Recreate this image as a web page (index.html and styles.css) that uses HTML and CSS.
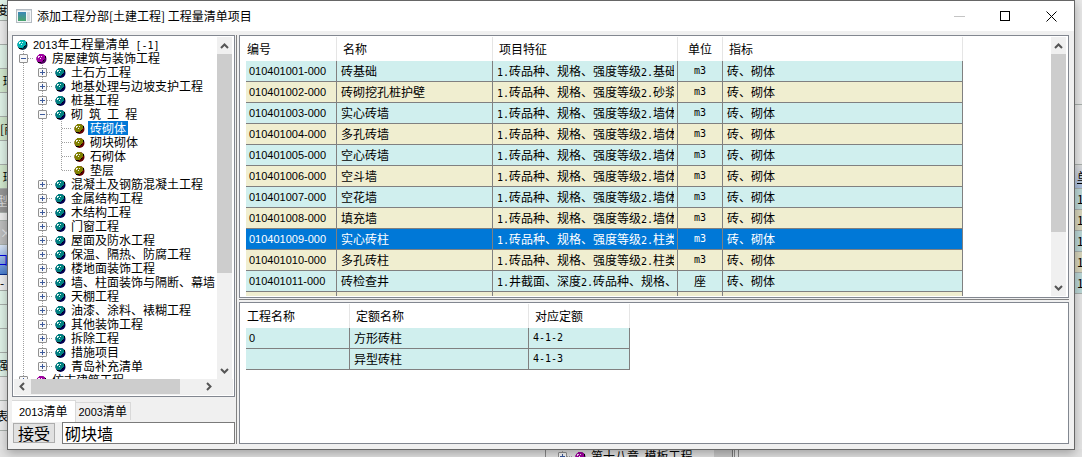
FILE: index.html
```html
<!DOCTYPE html>
<html lang="zh-CN">
<head>
<meta charset="utf-8">
<title>添加工程分部[土建工程] 工程量清单项目</title>
<link rel="stylesheet" href="styles.css">
</head>
<body>
<svg class="defs" aria-hidden="true">
  <defs>
    <symbol id="v" viewBox="0 0 19 14"><path class="dots" d="M9.5 0V14"/></symbol>
    <symbol id="tee" viewBox="0 0 19 14"><path class="dots" d="M9.5 0V14M10 7.5H19"/></symbol>
    <symbol id="elbow" viewBox="0 0 19 14"><path class="dots" d="M9.5 0V8M10 7.5H19"/></symbol>
    <symbol id="box" viewBox="0 0 19 14"><path class="dots" d="M9.5 0V14M14 7.5H19"/><rect x="5.5" y="3.5" width="8" height="8" rx=".5" fill="#f8f8f8" stroke="#919191"/></symbol>
    <symbol id="minus" viewBox="0 0 19 14"><use href="#box"/><path d="M7 7.5H12" stroke="#3c5a9c"/></symbol>
    <symbol id="plus" viewBox="0 0 19 14"><use href="#box"/><path d="M7 7.5H12M9.5 5V10" stroke="#3c5a9c"/></symbol>
    <symbol id="ball" viewBox="0 0 19 14">
      <circle cx="8.5" cy="8" r="5" class="ball-shade"/>
      <path d="M4 5H5V4H6V3H10V4H12V6H12V8H11V9H10V10H9V11H5V10H4V9H3.500V6H4Z" fill="currentColor"/>
      <path d="M5 11h3v1h-3zM12 5h1v2h-1zM10 9h1v1h-1z" fill="#000"/>
      <path d="M5 5h2v1h-1v1h-1zM8 5h1v1h-1zM7 7h1v1h-1z" fill="#fff" opacity=".9"/>
    </symbol>
    <symbol id="up" viewBox="0 0 15 17"><path class="arrow" d="M4 11L7.500 7.500L11 11"/></symbol>
    <symbol id="down" viewBox="0 0 15 17"><path class="arrow" d="M4 7L7.500 10.500L11 7"/></symbol>
    <symbol id="left" viewBox="0 0 17 15"><path class="arrow" d="M10 4L6.500 7.500L10 11"/></symbol>
    <symbol id="right" viewBox="0 0 17 15"><path class="arrow" d="M7 4L10.500 7.500L7 11"/></symbol>
  </defs>
</svg>

<div class="behind behind-left" aria-hidden="true">
  <span class="clip tail h21 mint">度</span>
  <span class="clip h24 pale"></span>
  <span class="clip h24 mint"></span>
  <span class="clip h24 green">&nbsp;环</span>
  <span class="clip h24 mint"></span>
  <span class="clip h24 green">[商</span>
  <span class="clip h24 mint"></span>
  <span class="clip h24 green">&nbsp;环</span>
  <span class="clip tail h24 dark">型</span>
  <span class="clip h8 pale"></span>
  <span class="clip h24 mid">×</span>
  <span class="clip tail h30 blue">口</span>
  <span class="clip h16 button-edge">-</span>
  <span class="clip h14 mint"></span>
  <span class="clip h24 mint"></span>
  <span class="clip h24 mint"></span>
  <span class="clip tail h24 mint">强</span>
  <span class="clip h24 pale"></span>
  <span class="clip tail h30 pale">表</span>
</div>
<div class="behind behind-right" aria-hidden="true">
  <span class="clip h105 light"></span>
  <span class="clip h60 light"></span>
  <span class="clip h24 head"><u>单</u></span>
  <span class="clip h21 cyan">1</span>
  <span class="clip h21 cream">1</span>
  <span class="clip h21 cyan">1</span>
  <span class="clip h21 cream">1</span>
  <span class="clip h21 cyan">1</span>
</div>
<div class="behind behind-bottom" aria-hidden="true">
  <div class="under-tree">
    <svg class="cell"><use href="#plus"/></svg><svg class="cell ball purple"><use href="#ball"/></svg>
    <span class="under-text">第十八章&nbsp; 模板工程</span><span class="under-bar"></span>
  </div>
  <div class="under-split"></div>
</div>

<main class="dialog">
  <header class="titlebar">
    <svg class="app-icon" viewBox="0 0 16 14">
      <defs><linearGradient id="g" x2="0" y2="1"><stop stop-color="#3c87b8"/><stop offset="1" stop-color="#4aa56c"/></linearGradient></defs>
      <rect x=".5" y=".5" width="15" height="13" fill="#f3f5f7" stroke="#b4bbc2"/>
      <rect x="2" y="3" width="8" height="9" fill="url(#g)"/>
      <rect x="11" y="3" width="3" height="9" fill="#d5dade"/>
      <path d="M1 1.500H15" stroke="#d5dce2"/>
    </svg>
    <h1 class="title">添加工程分部[土建工程] 工程量清单项目</h1>
    <button class="win-button" type="button" aria-label="最小化" disabled><svg class="win-icon" viewBox="0 0 11 11"><path d="M0 5.500H11" stroke="#c4c4c4"/></svg></button>
    <button class="win-button" type="button" aria-label="最大化"><svg class="win-icon" viewBox="0 0 11 11"><rect x=".5" y=".5" width="9" height="9" fill="none" stroke="#000"/></svg></button>
    <button class="win-button" type="button" aria-label="关闭"><svg class="win-icon" viewBox="0 0 11 11"><path d="M.5 .5L10.500 10.500M10.500 .5L.5 10.500" stroke="#000"/></svg></button>
  </header>

  <div class="content">
    <section class="side">
      <div class="panel tree-panel">
        <div class="tree-main">
          <ul class="tree">
            <li class="node"><svg class="cell ball bright"><use href="#ball"/></svg><span class="label"><span class="digits">2013</span>年工程量清单<span class="mono"> [-1]</span></span></li>
            <li class="node"><svg class="cell"><use href="#minus"/></svg><svg class="cell ball purple"><use href="#ball"/></svg><span class="label">房屋建筑与装饰工程</span></li>
            <li class="node"><svg class="cell"><use href="#v"/></svg><svg class="cell"><use href="#plus"/></svg><svg class="cell ball teal"><use href="#ball"/></svg><span class="label">土石方工程</span></li>
            <li class="node"><svg class="cell"><use href="#v"/></svg><svg class="cell"><use href="#plus"/></svg><svg class="cell ball teal"><use href="#ball"/></svg><span class="label">地基处理与边坡支护工程</span></li>
            <li class="node"><svg class="cell"><use href="#v"/></svg><svg class="cell"><use href="#plus"/></svg><svg class="cell ball teal"><use href="#ball"/></svg><span class="label">桩基工程</span></li>
            <li class="node"><svg class="cell"><use href="#v"/></svg><svg class="cell"><use href="#minus"/></svg><svg class="cell ball teal"><use href="#ball"/></svg><span class="label">砌<span class="mono"> </span>筑<span class="mono"> </span>工<span class="mono"> </span>程</span></li>
            <li class="node"><svg class="cell"><use href="#v"/></svg><svg class="cell"><use href="#v"/></svg><svg class="cell"><use href="#tee"/></svg><svg class="cell ball olive"><use href="#ball"/></svg><span class="label selected">砖砌体</span></li>
            <li class="node"><svg class="cell"><use href="#v"/></svg><svg class="cell"><use href="#v"/></svg><svg class="cell"><use href="#tee"/></svg><svg class="cell ball olive"><use href="#ball"/></svg><span class="label">砌块砌体</span></li>
            <li class="node"><svg class="cell"><use href="#v"/></svg><svg class="cell"><use href="#v"/></svg><svg class="cell"><use href="#tee"/></svg><svg class="cell ball olive"><use href="#ball"/></svg><span class="label">石砌体</span></li>
            <li class="node"><svg class="cell"><use href="#v"/></svg><svg class="cell"><use href="#v"/></svg><svg class="cell"><use href="#elbow"/></svg><svg class="cell ball olive"><use href="#ball"/></svg><span class="label">垫层</span></li>
            <li class="node"><svg class="cell"><use href="#v"/></svg><svg class="cell"><use href="#plus"/></svg><svg class="cell ball teal"><use href="#ball"/></svg><span class="label">混凝土及钢筋混凝土工程</span></li>
            <li class="node"><svg class="cell"><use href="#v"/></svg><svg class="cell"><use href="#plus"/></svg><svg class="cell ball teal"><use href="#ball"/></svg><span class="label">金属结构工程</span></li>
            <li class="node"><svg class="cell"><use href="#v"/></svg><svg class="cell"><use href="#plus"/></svg><svg class="cell ball teal"><use href="#ball"/></svg><span class="label">木结构工程</span></li>
            <li class="node"><svg class="cell"><use href="#v"/></svg><svg class="cell"><use href="#plus"/></svg><svg class="cell ball teal"><use href="#ball"/></svg><span class="label">门窗工程</span></li>
            <li class="node"><svg class="cell"><use href="#v"/></svg><svg class="cell"><use href="#plus"/></svg><svg class="cell ball teal"><use href="#ball"/></svg><span class="label">屋面及防水工程</span></li>
            <li class="node"><svg class="cell"><use href="#v"/></svg><svg class="cell"><use href="#plus"/></svg><svg class="cell ball teal"><use href="#ball"/></svg><span class="label">保温、隔热、防腐工程</span></li>
            <li class="node"><svg class="cell"><use href="#v"/></svg><svg class="cell"><use href="#plus"/></svg><svg class="cell ball teal"><use href="#ball"/></svg><span class="label">楼地面装饰工程</span></li>
            <li class="node"><svg class="cell"><use href="#v"/></svg><svg class="cell"><use href="#plus"/></svg><svg class="cell ball teal"><use href="#ball"/></svg><span class="label">墙、柱面装饰与隔断、幕墙</span></li>
            <li class="node"><svg class="cell"><use href="#v"/></svg><svg class="cell"><use href="#plus"/></svg><svg class="cell ball teal"><use href="#ball"/></svg><span class="label">天棚工程</span></li>
            <li class="node"><svg class="cell"><use href="#v"/></svg><svg class="cell"><use href="#plus"/></svg><svg class="cell ball teal"><use href="#ball"/></svg><span class="label">油漆、涂料、裱糊工程</span></li>
            <li class="node"><svg class="cell"><use href="#v"/></svg><svg class="cell"><use href="#plus"/></svg><svg class="cell ball teal"><use href="#ball"/></svg><span class="label">其他装饰工程</span></li>
            <li class="node"><svg class="cell"><use href="#v"/></svg><svg class="cell"><use href="#plus"/></svg><svg class="cell ball teal"><use href="#ball"/></svg><span class="label">拆除工程</span></li>
            <li class="node"><svg class="cell"><use href="#v"/></svg><svg class="cell"><use href="#plus"/></svg><svg class="cell ball teal"><use href="#ball"/></svg><span class="label">措施项目</span></li>
            <li class="node"><svg class="cell"><use href="#v"/></svg><svg class="cell"><use href="#plus"/></svg><svg class="cell ball teal"><use href="#ball"/></svg><span class="label">青岛补充清单</span></li>
            <li class="node"><svg class="cell"><use href="#plus"/></svg><svg class="cell ball purple"><use href="#ball"/></svg><span class="label">仿古建筑工程</span></li>
          </ul>
          <div class="vscroll"><svg class="varrow"><use href="#up"/></svg><div class="track"><div class="thumb tree-thumb"></div></div><svg class="varrow"><use href="#down"/></svg></div>
        </div>
        <div class="hscroll"><svg class="harrow"><use href="#left"/></svg><div class="track"><div class="thumb wide-thumb"></div></div><svg class="harrow"><use href="#right"/></svg></div>
      </div>
      <div class="tabs" role="tablist">
        <button class="tab active" type="button" role="tab" aria-selected="true"><span class="digits">2013</span>清单</button>
        <button class="tab" type="button" role="tab" aria-selected="false"><span class="digits">2003</span>清单</button>
      </div>
      <form class="search">
        <button class="accept" type="button">接受</button>
        <input class="query" type="text" value="砌块墙" aria-label="清单名称">
      </form>
    </section>

    <div class="split-v"></div>

    <section class="main">
      <div class="panel items-panel">
        <div class="grid-area">
          <table class="grid items">
            <colgroup><col class="c-code"><col class="c-name"><col class="c-feature"><col class="c-unit"><col class="c-index"></colgroup>
            <thead><tr><th>编号</th><th>名称</th><th>项目特征</th><th class="center">单位</th><th>指标</th></tr></thead>
            <tbody>
              <tr><td class="digits">010401001-000</td><td>砖基础</td><td><div class="cut"><span class="mono">1.</span>砖品种、规格、强度等级<span class="mono">2.</span>基础</div></td><td class="center mono">m3</td><td>砖、砌体</td></tr>
              <tr><td class="digits">010401002-000</td><td>砖砌挖孔桩护壁</td><td><div class="cut"><span class="mono">1.</span>砖品种、规格、强度等级<span class="mono">2.</span>砂浆</div></td><td class="center mono">m3</td><td>砖、砌体</td></tr>
              <tr><td class="digits">010401003-000</td><td>实心砖墙</td><td><div class="cut"><span class="mono">1.</span>砖品种、规格、强度等级<span class="mono">2.</span>墙体</div></td><td class="center mono">m3</td><td>砖、砌体</td></tr>
              <tr><td class="digits">010401004-000</td><td>多孔砖墙</td><td><div class="cut"><span class="mono">1.</span>砖品种、规格、强度等级<span class="mono">2.</span>墙体</div></td><td class="center mono">m3</td><td>砖、砌体</td></tr>
              <tr><td class="digits">010401005-000</td><td>空心砖墙</td><td><div class="cut"><span class="mono">1.</span>砖品种、规格、强度等级<span class="mono">2.</span>墙体</div></td><td class="center mono">m3</td><td>砖、砌体</td></tr>
              <tr><td class="digits">010401006-000</td><td>空斗墙</td><td><div class="cut"><span class="mono">1.</span>砖品种、规格、强度等级<span class="mono">2.</span>墙体</div></td><td class="center mono">m3</td><td>砖、砌体</td></tr>
              <tr><td class="digits">010401007-000</td><td>空花墙</td><td><div class="cut"><span class="mono">1.</span>砖品种、规格、强度等级<span class="mono">2.</span>墙体</div></td><td class="center mono">m3</td><td>砖、砌体</td></tr>
              <tr><td class="digits">010401008-000</td><td>填充墙</td><td><div class="cut"><span class="mono">1.</span>砖品种、规格、强度等级<span class="mono">2.</span>墙体</div></td><td class="center mono">m3</td><td>砖、砌体</td></tr>
              <tr class="current"><td class="digits">010401009-000</td><td>实心砖柱</td><td><div class="cut"><span class="mono">1.</span>砖品种、规格、强度等级<span class="mono">2.</span>柱类</div></td><td class="center mono">m3</td><td>砖、砌体</td></tr>
              <tr><td class="digits">010401010-000</td><td>多孔砖柱</td><td><div class="cut"><span class="mono">1.</span>砖品种、规格、强度等级<span class="mono">2.</span>柱类</div></td><td class="center mono">m3</td><td>砖、砌体</td></tr>
              <tr><td class="digits">010401011-000</td><td>砖检查井</td><td><div class="cut"><span class="mono">1.</span>井截面、深度<span class="mono">2.</span>砖品种、规格、</div></td><td class="center">座</td><td>砖、砌体</td></tr>
              <tr><td></td><td></td><td></td><td></td><td></td></tr>
            </tbody>
          </table>
        </div>
        <div class="vscroll"><svg class="varrow"><use href="#up"/></svg><div class="track"><div class="thumb items-thumb"></div></div><svg class="varrow"><use href="#down"/></svg></div>
      </div>
      <div class="split-h"></div>
      <div class="panel quota-panel">
        <div class="grid-area">
          <table class="grid quotas">
            <colgroup><col class="c-project"><col class="c-quota"><col class="c-match"></colgroup>
            <thead><tr><th>工程名称</th><th>定额名称</th><th>对应定额</th></tr></thead>
            <tbody>
              <tr><td class="digits">0</td><td>方形砖柱</td><td class="mono">4-1-2</td></tr>
              <tr><td></td><td>异型砖柱</td><td class="mono">4-1-3</td></tr>
            </tbody>
          </table>
        </div>
      </div>
    </section>
  </div>
</main>
</body>
</html>
```
FILE: styles.css
```css
* { box-sizing: border-box; }

body {
  margin: 0;
  height: 100vh;
  overflow: hidden;
  background: #e6e6e6;
  color: #000;
  font: 12px/14px "Noto Sans CJK SC", sans-serif;
}

button, input { font: inherit; color: inherit; margin: 0; }
svg { display: block; flex: none; }
.defs { position: absolute; width: 0; height: 0; }

.digits { font-family: "Liberation Sans", "Noto Sans CJK SC", sans-serif; font-size: 11px; }
.mono { font-family: "DejaVu Sans Mono", "Noto Sans CJK SC", monospace; font-size: 10px; white-space: pre; }

/* Windows underneath the dialog */
.behind { position: absolute; overflow: hidden; display: flex; }
.behind-left { left: 0; top: 0; width: 8px; flex-direction: column; }
.behind-right { right: 0; top: 0; width: 8px; flex-direction: column; }
.behind-bottom { left: 0; right: 0; bottom: 0; height: 8px; padding-left: 545px; background: #e2e2e2; }
.clip { display: flex; flex: none; align-items: center; overflow: hidden; white-space: nowrap; border-bottom: 1px solid #a9b0ac; }
.tail { justify-content: flex-end; }
.h8 { height: 8px; } .h14 { height: 14px; } .h16 { height: 16px; }
.h21 { height: 21px; } .h24 { height: 24px; } .h30 { height: 30px; }
.h60 { height: 60px; } .h105 { height: 105px; }
.mint { background: #e0f3e8; }
.green { background: #d3eacf; }
.pale { background: #ededed; }
.light { background: #e8e8e8; }
.dark { background: #969696; color: #ddd; }
.mid { background: #bebebe; color: #eee; }
.blue { background: linear-gradient(#dce8f8, #4b7fd0); color: #0000e0; border-bottom-color: #0a2f8f; }
.button-edge { background: #f0f0f0; }
.head { background: linear-gradient(#dcdcdc, #a9bede); padding-left: 3px; }
.cyan { background: #bcd8d7; padding-left: 3px; }
.cream { background: #d8d6bc; padding-left: 3px; }
.under-tree { display: flex; width: 188px; height: 14px; padding-left: 7px; border-left: 1px solid #888; border-right: 1px solid #777; }
.under-text { line-height: 14px; white-space: nowrap; }
.under-bar { width: 18px; margin-left: auto; background: #c8c8c8; }
.under-split { width: 5px; margin-left: 1px; border: 1px solid #888; border-width: 0 1px; }

/* Dialog frame */
.dialog {
  position: relative;
  display: flex;
  flex-direction: column;
  height: calc(100vh - 7px);
  margin: 0 7px 7px;
  border: 1px solid #666;
  background: #f0f0f0;
  box-shadow: 0 3px 10px rgba(0, 0, 0, .3);
}
.titlebar { display: flex; flex: none; align-items: center; height: 30px; padding-left: 8px; background: #fff; }
.app-icon { width: 16px; height: 14px; }
.title { flex: 1; margin: 0 0 0 5px; font-size: 12px; font-weight: 400; white-space: nowrap; }
.win-button { display: flex; flex: none; align-items: center; justify-content: center; width: 46px; height: 30px; padding: 0; border: 0; background: none; }
.win-icon { width: 11px; height: 11px; }

.content { display: flex; flex: 1; min-height: 0; padding: 4px 5px 5px 4px; }
.side { display: flex; flex: none; flex-direction: column; width: 223px; }
.split-v { flex: none; width: 1px; margin: 0 2px 0 1px; background: #828282; }
.main { display: grid; flex: 1; grid-template-rows: minmax(0, 263fr) auto minmax(0, 142fr); min-width: 0; }
.split-h { height: 1px; margin: 1px 0 2px; background: #828282; }
.panel { display: flex; min-width: 0; min-height: 0; padding: 1px; border: 1px solid #828790; background: #fff; }

/* Tree */
.tree-panel { flex: 1; flex-direction: column; }
.tree-main { display: flex; flex: 1; min-height: 0; margin-right: 1px; }
.tree { flex: 1; min-width: 0; margin: 0; padding: 0; overflow: hidden; list-style: none; }
.node { display: flex; height: 14px; white-space: nowrap; }
.cell { width: 19px; height: 14px; }
.label { line-height: 14px; }
.selected { margin-left: -2px; padding: 0 2px; background: #0078d7; color: #fff; }
.dots { fill: none; stroke: #a0a0a0; stroke-width: 1px; stroke-dasharray: 1 1; }
.ball-shade { fill: var(--shade); }
.bright { color: #00b4b4; --shade: #003048; }
.teal { color: #008080; --shade: #000050; }
.purple { color: #a000a0; --shade: #500060; }
.olive { color: #808000; --shade: #600000; }

/* Scroll bars */
.vscroll { display: flex; flex: none; flex-direction: column; width: 15px; background: #f0f0f0; }
.hscroll { display: flex; flex: none; height: 16px; padding-right: 16px; background: #f0f0f0; }
.track { flex: 1; min-width: 0; min-height: 0; }
.thumb { background: #cdcdcd; }
.tree-thumb { height: 71%; }
.items-thumb { height: 79%; }
.wide-thumb { width: 88%; height: 15px; }
.varrow { width: 15px; height: 17px; }
.harrow { width: 17px; height: 15px; }
.arrow { fill: none; stroke: #555; stroke-width: 2px; }

/* Tabs and search */
.tabs { display: flex; flex: none; align-items: flex-start; height: 25px; padding-top: 3px; }
.tab { flex: none; height: 18px; margin-top: 2px; padding: 0 3px; border: 1px solid #d9d9d9; border-width: 1px 1px 0 0; background: #f0f0f0; line-height: 14px; white-space: nowrap; }
.active { height: 22px; margin-top: 0; padding: 0 7px; background: #fff; }
.search { display: flex; flex: none; height: 22px; gap: 7px; margin: 0; padding-left: 1px; }
.accept { width: 42px; height: 20px; margin-top: 1px; padding: 0; border: 1px solid #adadad; background: #e1e1e1; font-size: 16px; line-height: 16px; }
.query { flex: 1; min-width: 0; padding: 0 2px; border: 1px solid #7a7a7a; background: #fff; font-size: 16px; }

/* Data grids */
.items-panel .vscroll { margin-right: 1px; }
.grid-area { flex: 1; min-width: 0; padding-left: 5px; overflow: hidden; }
.grid { table-layout: fixed; border-spacing: 0; }
.items { width: 717px; }
.quotas { width: 384px; }
.c-code { width: 91px; } .c-name { width: 156px; } .c-feature { width: 185px; } .c-unit { width: 45px; } .c-index { width: 240px; }
.c-project { width: 104px; } .c-quota { width: 179px; } .c-match { width: 101px; }
.grid th { height: 24px; padding: 0 0 0 6px; border-right: 1px solid #e5e5e5; font-weight: 400; text-align: left; }
.grid th:first-child { padding-left: 1px; }
.grid td { height: 21px; padding: 0 3px 0 4px; border-right: 1px solid #808080; border-bottom: 1px solid #808080; line-height: 14px; white-space: nowrap; }
.grid td:first-child { padding-left: 3px; }
.grid .center { padding: 0; text-align: center; }
.grid tbody tr { background: #d0efee; }
.items tbody tr:nth-child(even) { background: #f0eed0; }
.items tbody tr.current { background: #0078d7; color: #fff; }
.cut { height: 14px; overflow: hidden; }
```
